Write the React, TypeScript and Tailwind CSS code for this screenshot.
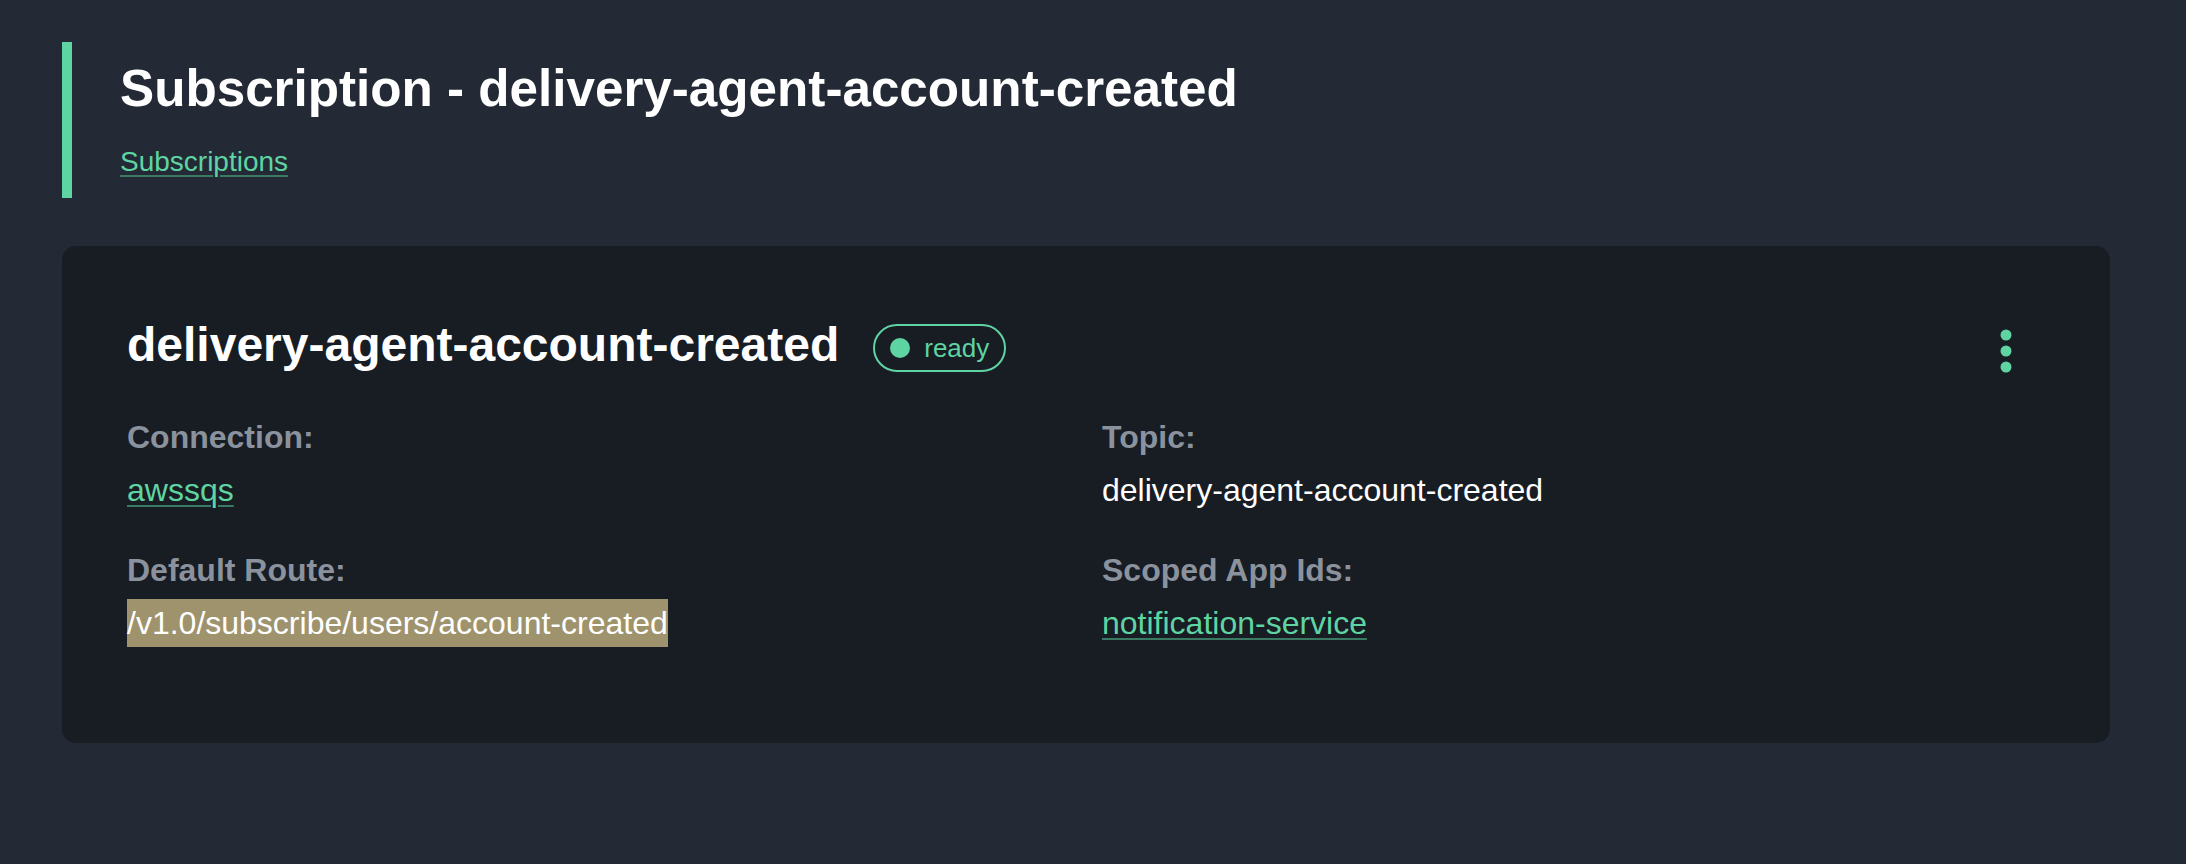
import type React from "react";

const green = "#5fd4a3";

const Field: React.FC<{ label: string; children: React.ReactNode }> = ({ label, children }) => (
  <div className="flex flex-col">
    <span className="text-[32px] leading-[48px] font-bold text-[#8a929e]">{label}</span>
    <div className="mt-[5px] text-[32px] leading-[48px]">{children}</div>
  </div>
);

const linkClass =
  "text-[#5fd4a3] underline decoration-2 decoration-[#3a7a62] underline-offset-[4px]";

const App: React.FC = () => {
  return (
    <div
      className="min-h-screen w-full bg-[#232a35] pl-[62px] pr-[76px] pt-[42px] pb-16 text-white"
      style={{ fontFamily: '"Liberation Sans", Arial, Helvetica, sans-serif' }}
    >
      {/* Header */}
      <header className="border-l-[10px] border-[#5fd4a3] pl-[48px] pt-[16px] pb-[15px]">
        <h1 className="text-[51.2px] leading-[61px] font-bold text-white">
          Subscription - delivery-agent-account-created
        </h1>
        <a href="#" className={`mt-[22px] inline-block text-[28px] leading-[42px] ${linkClass}`}>
          Subscriptions
        </a>
      </header>

      {/* Card */}
      <section className="mt-[48px] rounded-[14px] bg-[#181c23] px-[65px] pt-[70px] pb-[96px]">
        <div className="flex items-center">
          <h2 className="text-[48px] leading-[58px] font-bold text-white">
            delivery-agent-account-created
          </h2>
          <span
            className="ml-[34px] mt-[6px] flex h-[48px] items-center gap-[14px] rounded-full border-2 px-[15px] text-[26px] leading-none"
            style={{ borderColor: green, color: green }}
          >
            <span className="h-[20px] w-[20px] rounded-full" style={{ backgroundColor: green }} />
            ready
          </span>
          <div className="flex-1" />
          <button className="mr-[33px] mt-[12px]" aria-label="More">
            <svg width="12" height="44" viewBox="0 0 12 44" fill={green}>
              <circle cx="6" cy="6" r="5.5" />
              <circle cx="6" cy="22" r="5.5" />
              <circle cx="6" cy="38" r="5.5" />
            </svg>
          </button>
        </div>

        <div className="mt-[39px] grid grid-cols-2 gap-x-8 gap-y-8">
          <Field label="Connection:">
            <a href="#" className={linkClass}>
              awssqs
            </a>
          </Field>
          <Field label="Topic:">
            <span className="text-white">delivery-agent-account-created</span>
          </Field>
          <Field label="Default Route:">
            <span className="inline-block bg-[#9e936c] leading-[48px] text-white">
              /v1.0/subscribe/users/account-created
            </span>
          </Field>
          <Field label="Scoped App Ids:">
            <a href="#" className={linkClass}>
              notification-service
            </a>
          </Field>
        </div>
      </section>
    </div>
  );
};

export default App;
